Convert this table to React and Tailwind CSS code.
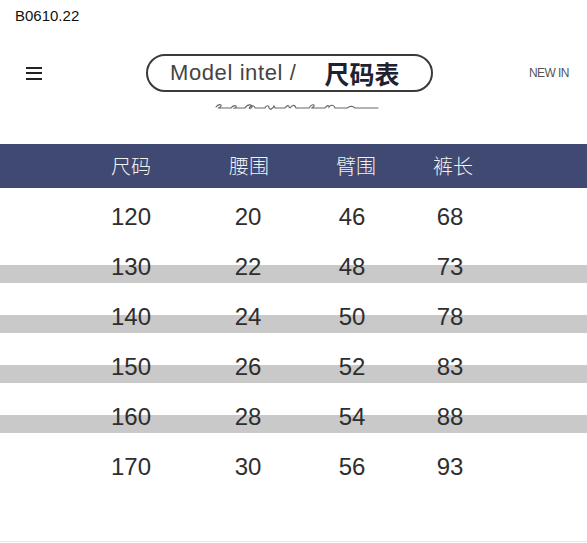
export default function App() {
  const rows = [
    ["120", "20", "46", "68", false],
    ["130", "22", "48", "73", true],
    ["140", "24", "50", "78", true],
    ["150", "26", "52", "83", true],
    ["160", "28", "54", "88", true],
    ["170", "30", "56", "93", false],
  ];
  const band =
    "bg-[linear-gradient(to_bottom,transparent_23px,#c9c9c9_23px,#c9c9c9_41px,transparent_41px)]";
  return (
    <div className="w-[587px] h-[543px] bg-white overflow-hidden font-['Liberation_Sans',Arial,sans-serif]">
      <div className="pt-[7px] pl-[15px] text-[15px] leading-[18px] text-[#111]">B0610.22</div>

      <div className="mt-[29px] h-[38px] flex items-center">
        <div className="ml-[26px] w-[16px] flex flex-col gap-[3.5px]">
          <div className="h-[2px] bg-[#222]" />
          <div className="h-[2px] bg-[#222]" />
          <div className="h-[2px] bg-[#222]" />
        </div>
        <div className="ml-[104px] w-[287px] h-[38px] rounded-full border-2 border-[#3a3a3a] flex items-center pl-[22px]">
          <span className="text-[22px] leading-none text-[#444] tracking-[0.6px]">Model intel /</span>
          <span className="ml-[28px] text-[25px] leading-none font-bold text-[#1e2230] font-['Noto_Sans_CJK_SC',sans-serif]">
            尺码表
          </span>
        </div>
        <div className="ml-[96px] text-[12px] tracking-[-0.6px] text-[#555]">NEW IN</div>
      </div>

      <svg className="mt-[9px] ml-[215px] block" width="164" height="10" viewBox="0 0 164 10" fill="none">
        <path
          d="M1 6 C3 3 7 3 6 5 C5 7 2 7 4 7 L16 7 C18 4 22 4 21 6 C20 8 17 7 20 7 L30 7 C32 3 38 3 37 6 C36 8 33 8 35 6 C37 4 40 5 40 7 L50 7 C51 4 54 4 54 7 C55 9 58 8 59 5 L60 7 L70 7 C72 4 74 4 74 6 L75 7 C78 3 80 4 81 7 L94 7 C96 3 100 3 99 5 C98 7 95 7 98 7 L110 7 C112 4 114 4 114 6 C116 3 119 4 120 7 L132 7 C135 5 138 5 140 7 L163 7"
          stroke="#666"
          strokeWidth="1.1"
          strokeLinecap="round"
        />
      </svg>

      <div className="mt-[33px] h-[44px] bg-[#404971] flex items-center text-[20px] leading-none text-[#f2f2f2] font-light font-['Noto_Sans_CJK_SC',sans-serif]">
        <div className="ml-[91px] w-[80px] text-center">尺码</div>
        <div className="ml-[38px] w-[80px] text-center">腰围</div>
        <div className="ml-[27px] w-[80px] text-center">臂围</div>
        <div className="ml-[17px] w-[80px] text-center">裤长</div>
      </div>

      <div className="mt-[4px]">
        {rows.map((r) => (
          <div
            key={r[0]}
            className={`h-[50px] flex items-center text-[24px] leading-[50px] text-[#2e2e2e] ${r[4] ? band : ""}`}
          >
            <div className="ml-[91px] w-[80px] text-center">{r[0]}</div>
            <div className="ml-[37px] w-[80px] text-center">{r[1]}</div>
            <div className="ml-[24px] w-[80px] text-center">{r[2]}</div>
            <div className="ml-[18px] w-[80px] text-center">{r[3]}</div>
          </div>
        ))}
      </div>

      <div className="mt-[49px] h-px bg-[#e6e6e6]" />
    </div>
  );
}
